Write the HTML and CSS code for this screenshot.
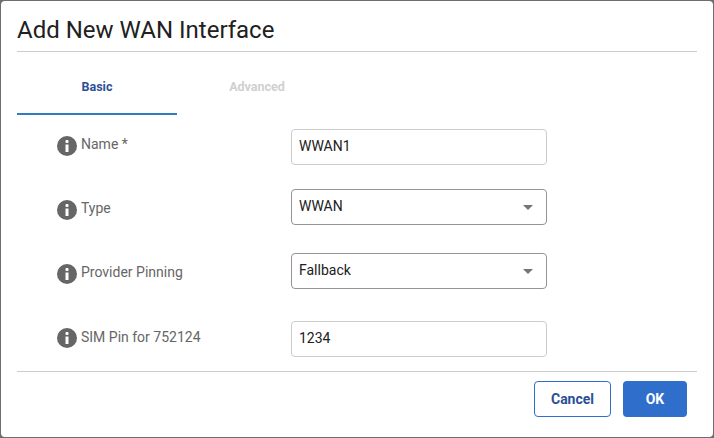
FILE: index.html
```html
<!DOCTYPE html>
<html lang="en">
<head>
<meta charset="utf-8">
<title>Add New WAN Interface</title>
<link rel="stylesheet" href="styles.css">
</head>
<body>
<div class="dialog">
  <h1 class="title">Add New WAN Interface</h1>
  <div class="tabs">
    <div class="tab active">Basic</div>
    <div class="tab disabled">Advanced</div>
  </div>
  <div class="form">
    <div class="row row-name">
      <div class="label"><svg class="info" viewBox="0 0 20 20"><circle cx="10" cy="10" r="10" fill="#666"/><rect x="8.5" y="4" width="3" height="3" rx="1" fill="#fff"/><rect x="8.5" y="8.5" width="3" height="7.5" fill="#fff"/></svg><span>Name *</span></div>
      <div class="field light">WWAN1</div>
    </div>
    <div class="row row-type">
      <div class="label"><svg class="info" viewBox="0 0 20 20"><circle cx="10" cy="10" r="10" fill="#666"/><rect x="8.5" y="4" width="3" height="3" rx="1" fill="#fff"/><rect x="8.5" y="8.5" width="3" height="7.5" fill="#fff"/></svg><span>Type</span></div>
      <div class="field dark">WWAN<i class="caret"></i></div>
    </div>
    <div class="row row-provider">
      <div class="label"><svg class="info" viewBox="0 0 20 20"><circle cx="10" cy="10" r="10" fill="#666"/><rect x="8.5" y="4" width="3" height="3" rx="1" fill="#fff"/><rect x="8.5" y="8.5" width="3" height="7.5" fill="#fff"/></svg><span>Provider Pinning</span></div>
      <div class="field dark">Fallback<i class="caret"></i></div>
    </div>
    <div class="row row-sim">
      <div class="label"><svg class="info" viewBox="0 0 20 20"><circle cx="10" cy="10" r="10" fill="#666"/><rect x="8.5" y="4" width="3" height="3" rx="1" fill="#fff"/><rect x="8.5" y="8.5" width="3" height="7.5" fill="#fff"/></svg><span>SIM Pin for 752124</span></div>
      <div class="field light">1234</div>
    </div>
  </div>
  <div class="footer">
    <button class="btn cancel">Cancel</button>
    <button class="btn ok">OK</button>
  </div>
</div>
</body>
</html>
```
FILE: styles.css
```css
* { box-sizing: border-box; }
html, body { margin: 0; height: 100%; background: #6e6e6e; }
body { font-family: Roboto, "Liberation Sans", sans-serif; overflow: hidden; }
.dialog {
  width: 712px; height: 436px; margin: 1px 0 0 1px;
  background: #fff; border-radius: 4px;
  padding: 0 16px; display: flex; flex-direction: column;
}
.title {
  margin: 0; height: 51px; padding-top: 15px;
  font-size: 24px; line-height: 28px; font-weight: 400; color: #212121;
  border-bottom: 1px solid #ccc;
}
.tabs { display: flex; height: 63px; }
.tab {
  width: 160px; height: 63px; text-align: center;
  font-size: 12.5px; font-weight: 700; line-height: 70px;
}
.tab.active { color: #2b4f96; border-bottom: 2px solid #2f7cc4; }
.tab.disabled { color: #d0d0d0; }
.form { flex: 1; padding-left: 40px; display: flex; flex-direction: column; }
.row { display: flex; }
.row-name { margin-top: 14px; }
.row-type { margin-top: 24px; }
.row-provider { margin-top: 28px; }
.row-sim { margin-top: 32px; }
.label {
  width: 234px; display: flex; align-items: flex-start; gap: 4px;
  font-size: 14px; line-height: 16px; color: #666; padding-top: 7px;
}
.row-type .label, .row-provider .label { padding-top: 11px; }
.row-sim .label span { padding-top: 1px; }
.info { width: 20px; height: 20px; flex: none; }
.field {
  width: 256px; height: 36px; padding: 0 7px; position: relative;
  border-radius: 4px; background: #fff; color: #212121;
  font-size: 14px; line-height: 32px; border: 1px solid #ccc;
}
.field.dark { border-color: #949494; }
.caret {
  position: absolute; right: 13px; top: 15px; width: 0; height: 0;
  border-left: 5px solid transparent; border-right: 5px solid transparent;
  border-top: 5px solid #757575;
}
.footer {
  border-top: 1px solid #ccc; height: 66px; display: flex; justify-content: flex-end;
  gap: 12px; padding: 9px 10px 0 0;
}
.btn {
  height: 36px; border-radius: 4px; font-family: inherit;
  font-size: 14px; font-weight: 700; padding: 0;
}
.cancel { width: 77px; background: #fff; color: #2b4f96; border: 1px solid #2f6ecb; }
.ok { width: 64px; background: #2f6ecb; color: #fff; border: 0; }
```
